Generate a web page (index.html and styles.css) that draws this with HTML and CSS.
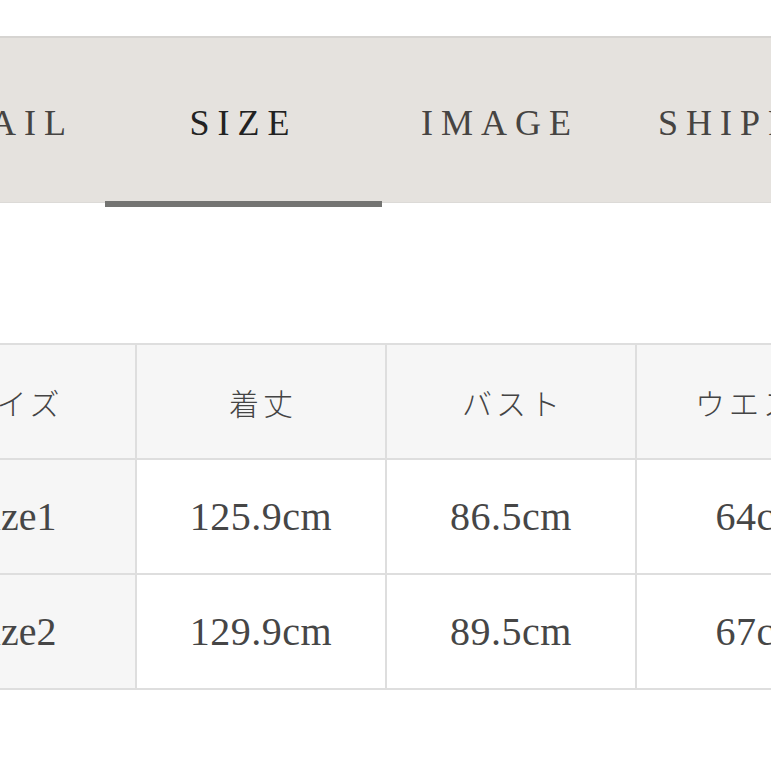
FILE: index.html
```html
<!DOCTYPE html>
<html lang="ja">
<head>
<meta charset="utf-8">
<title>Size</title>
<link rel="stylesheet" href="styles.css">
</head>
<body>
<div class="page">
  <nav class="tabs">
    <div class="tab tab-detail">DETAIL</div>
    <div class="tab tab-size active">SIZE</div>
    <div class="tab tab-image">IMAGE</div>
    <div class="tab tab-shipping">SHIPPING</div>
  </nav>
  <table class="size-table">
    <colgroup>
      <col class="c"><col class="c"><col class="c"><col class="c">
    </colgroup>
    <thead>
      <tr>
        <th class="ja">サイズ</th>
        <th class="ja">着丈</th>
        <th class="ja">バスト</th>
        <th class="ja">ウエスト</th>
      </tr>
    </thead>
    <tbody>
      <tr>
        <th class="name">Size1</th>
        <td>125.9cm</td>
        <td>86.5cm</td>
        <td>64cm</td>
      </tr>
      <tr>
        <th class="name">Size2</th>
        <td>129.9cm</td>
        <td>89.5cm</td>
        <td>67cm</td>
      </tr>
    </tbody>
  </table>
</div>
</body>
</html>
```
FILE: styles.css
```css
html, body {
  margin: 0;
  padding: 0;
  background: #ffffff;
}
body {
  width: 771px;
  height: 771px;
  overflow: hidden;
}
.page {
  width: 771px;
  overflow: hidden;
  padding-top: 36px;
}
.tabs {
  display: flex;
  margin-left: -132px;
  width: 1100px;
  height: 164px;
  background: #e5e2de;
  border-top: 2px solid #d6d4d1;
  border-bottom: 1px solid #dcdad7;
}
.tab {
  position: relative;
  box-sizing: border-box;
  display: flex;
  align-items: center;
  justify-content: center;
  padding-left: 0;
  padding-top: 6px;
  font-family: "Liberation Serif", "Times New Roman", serif;
  font-size: 36px;
  letter-spacing: 8px;
  color: #464442;
  flex: none;
}
.tab-detail { width: 237px; }
.tab-size { width: 277px; color: #222; }
.tab-image { width: 236px; }
.tab-shipping { width: 306px; }
.tab.active::after {
  content: "";
  position: absolute;
  left: 0;
  right: 0;
  bottom: -5px;
  height: 6px;
  background: #747472;
}
.size-table {
  margin-top: 140px;
  margin-left: -115px;
  width: 1000px;
  table-layout: fixed;
  border-collapse: collapse;
  font-family: "Liberation Serif", "Times New Roman", serif;
  color: #464646;
}
.size-table col.c { width: 250px; }
.size-table tr { height: 115px; }
.size-table th,
.size-table td {
  border: 2px solid #dedede;
  text-align: center;
  vertical-align: middle;
  padding: 0;
  font-weight: normal;
  font-size: 40px;
}
.size-table thead th {
  background: #f6f6f6;
}
.size-table th.ja {
  font-family: "Noto Sans CJK JP", sans-serif;
  font-weight: 300;
  font-size: 30px;
  letter-spacing: 4px;
  color: #444444;
  padding-left: 4px;
}
.size-table th.name {
  background: #f6f6f6;
  padding-left: 2px;
}
.size-table td {
  background: #ffffff;
  letter-spacing: 0.5px;
}
```
